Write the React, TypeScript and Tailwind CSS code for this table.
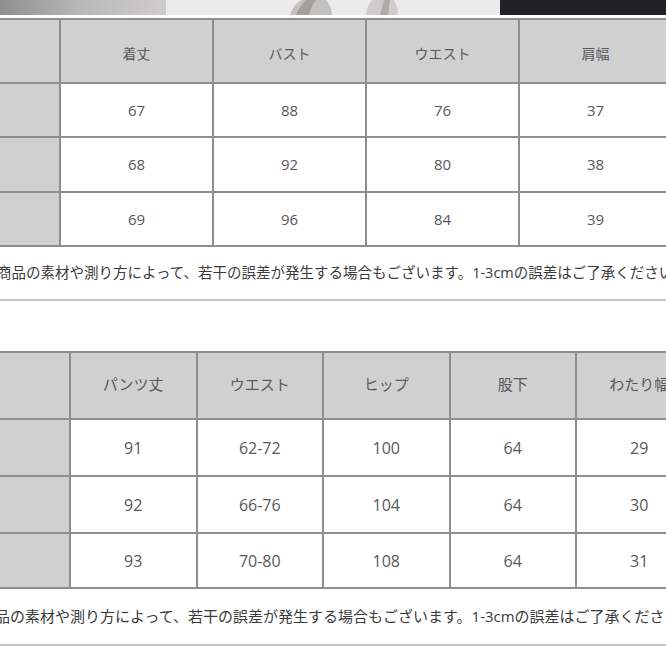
import React from "react";

const font = { fontFamily: '"Open Sans", "Noto Sans CJK JP", sans-serif' };

function Table1() {
  const heads = ["着丈", "バスト", "ウエスト", "肩幅"];
  const rows = [
    ["67", "88", "76", "37"],
    ["68", "92", "80", "38"],
    ["69", "96", "84", "39"],
  ];
  return (
    <div className="w-[680px] border-t-2 border-[#8e8e8e]">
      <div className="flex h-[64px] border-b-2 border-[#8e8e8e] bg-[#d0d0d0]">
        <div className="w-[61px] shrink-0 border-r-2 border-[#8e8e8e]" />
        {heads.map((h) => (
          <div key={h} className="flex w-[153px] shrink-0 items-center justify-center border-r-2 border-[#8e8e8e] pt-[4px] text-[14px] text-[#5a5a5a]">
            {h}
          </div>
        ))}
      </div>
      {rows.map((r, i) => (
        <div key={i} className={`flex border-b-2 border-[#8e8e8e] ${i === 1 ? "h-[55px]" : "h-[54px]"}`}>
          <div className="w-[61px] shrink-0 border-r-2 border-[#8e8e8e] bg-[#d0d0d0]" />
          {r.map((v, j) => (
            <div key={j} className="flex w-[153px] shrink-0 items-center justify-center border-r-2 border-[#8e8e8e] bg-white text-[15px] text-[#585858]">
              {v}
            </div>
          ))}
        </div>
      ))}
      <div className="flex h-[54px] items-center overflow-hidden whitespace-nowrap border-b-2 border-[#c4c4c4]">
        <span className="ml-[-3px] text-[14.5px] text-[#3a3a3a]">
          商品の素材や測り方によって、若干の誤差が発生する場合もございます。1-3cmの誤差はご了承ください。
        </span>
      </div>
    </div>
  );
}

function Table2() {
  const heads = ["パンツ丈", "ウエスト", "ヒップ", "股下", "わたり幅"];
  const rows = [
    ["91", "62-72", "100", "64", "29"],
    ["92", "66-76", "104", "64", "30"],
    ["93", "70-80", "108", "64", "31"],
  ];
  return (
    <div className="w-[720px] border-t-2 border-[#8e8e8e]">
      <div className="flex h-[67px] border-b-2 border-[#8e8e8e] bg-[#d0d0d0]">
        <div className="w-[71px] shrink-0 border-r-2 border-[#8e8e8e]" />
        {heads.map((h) => (
          <div key={h} className="flex w-[126.5px] shrink-0 items-center justify-center border-r-2 border-[#8e8e8e] pb-[2px] text-[15px] text-[#5a5a5a]">
            {h}
          </div>
        ))}
      </div>
      {rows.map((r, i) => (
        <div key={i} className={`flex border-b-2 border-[#8e8e8e] ${i === 2 ? "h-[55px]" : "h-[57px]"}`}>
          <div className="w-[71px] shrink-0 border-r-2 border-[#8e8e8e] bg-[#d0d0d0]" />
          {r.map((v, j) => (
            <div key={j} className="flex w-[126.5px] shrink-0 items-center justify-center border-r-2 border-[#8e8e8e] bg-white text-[16px] text-[#585858]">
              {v}
            </div>
          ))}
        </div>
      ))}
      <div className="flex h-[57px] items-center overflow-hidden whitespace-nowrap border-b-2 border-[#c4c4c4]">
        <span className="ml-[-20px] text-[15px] text-[#3a3a3a]">
          商品の素材や測り方によって、若干の誤差が発生する場合もございます。1-3cmの誤差はご了承ください。
        </span>
      </div>
    </div>
  );
}

export default function App() {
  return (
    <div className="h-[666px] w-[666px] overflow-hidden bg-white" style={font}>
      <div className="flex h-[15px]">
        <div className="w-[166px] bg-gradient-to-r from-[#8f8f8f] via-[#b9b9b9] to-[#cfcdca]" />
        <div className="relative w-[334px] bg-[#ebebeb]">
          <svg className="absolute left-0 top-0" width="334" height="15" viewBox="0 0 334 15">
            <path d="M124 15 C126 8 130 3 136 0 L160 0 C164 5 166 10 166 15 Z" fill="#c4c2be" />
            <path d="M130 15 C132 9 136 4 140 0 L150 0 C146 5 144 10 143 15 Z" fill="#a3a09c" />
            <path d="M200 15 C201 8 203 3 206 0 L228 0 C231 5 232 10 232 15 Z" fill="#cfcdc9" />
            <path d="M214 15 L218 0 L224 0 L222 15 Z" fill="#aeaba6" />
          </svg>
        </div>
        <div className="flex-1 bg-[#222226]" />
      </div>
      <div className="h-[3px]" />
      <Table1 />
      <div className="h-[50px]" />
      <Table2 />
    </div>
  );
}
